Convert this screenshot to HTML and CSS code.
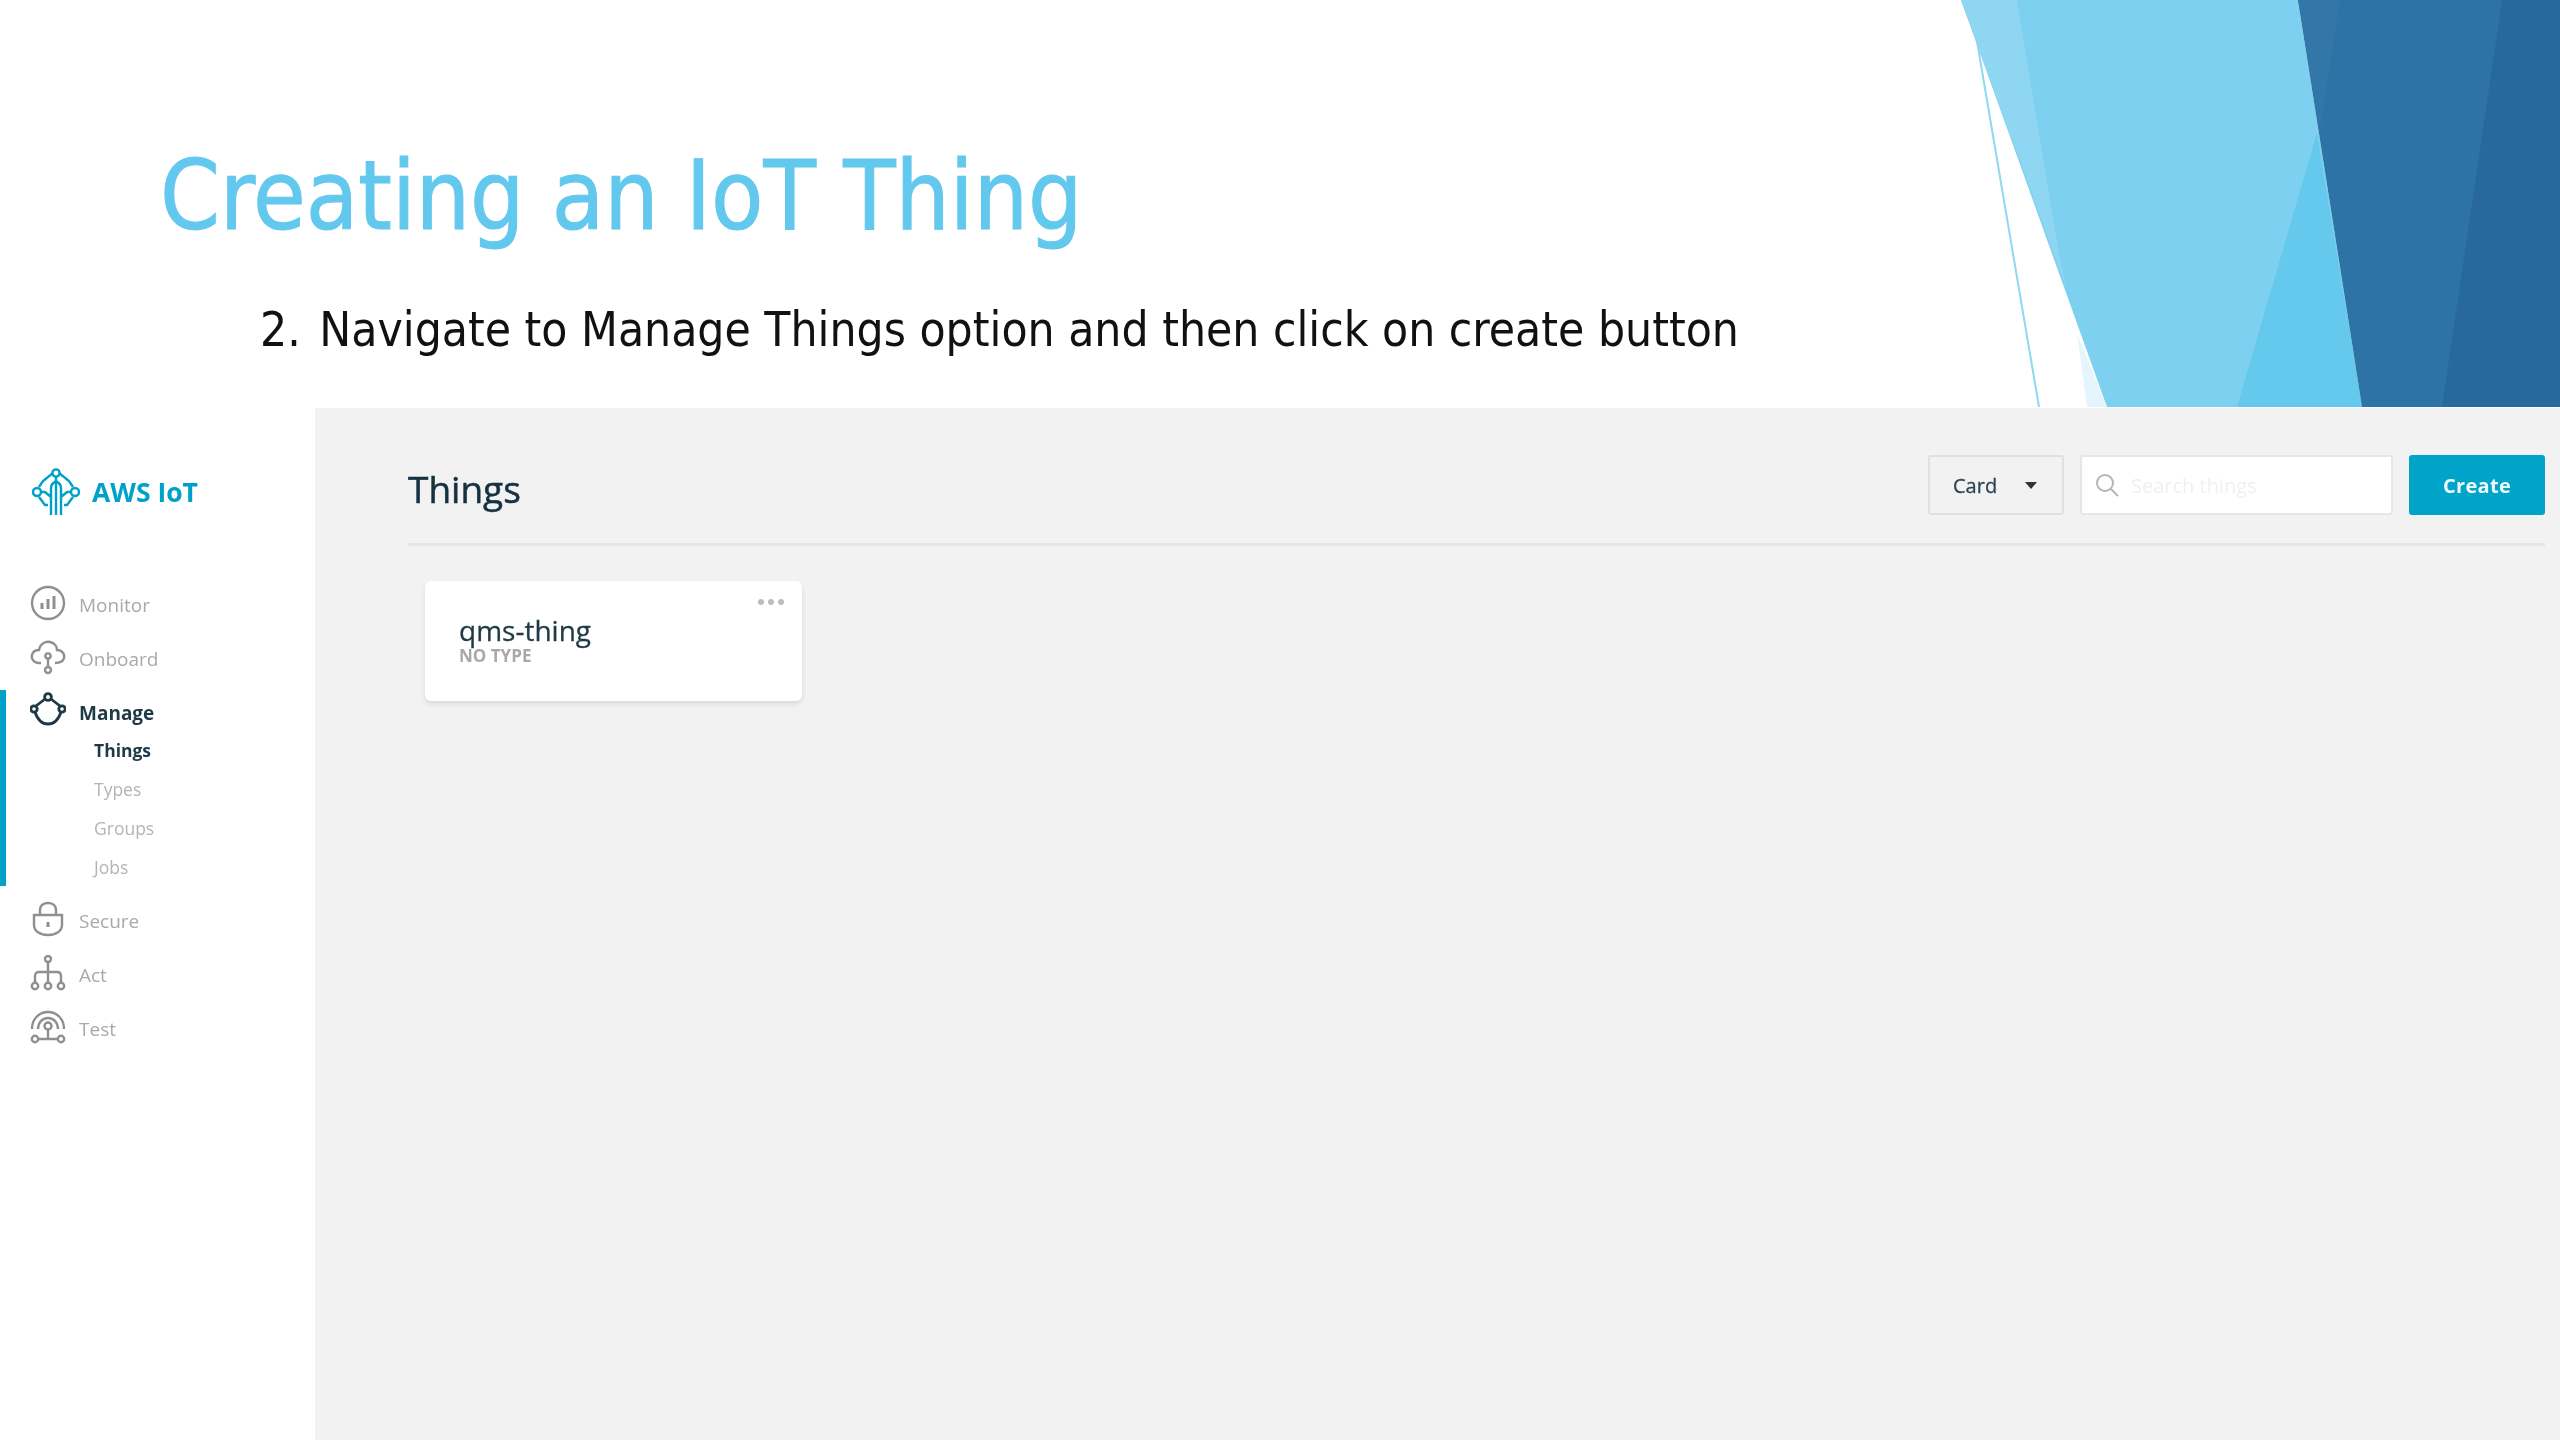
FILE: index.html
```html
<!DOCTYPE html>
<html lang="en">
<head>
<meta charset="utf-8">
<title>Creating an IoT Thing</title>
<link rel="stylesheet" href="styles.css">
</head>
<body>
<header class="slide">
  <svg class="slide-art" viewBox="0 0 640 408" width="640" height="408" aria-hidden="true">
    <polygon points="41,0 378,0 442,407 187,407" fill="#7dd0ef"/>
    <polygon points="41,0 97,0 140,260 147,290" fill="#8ed6f1"/>
    <polygon points="397,133 317,407 442,407" fill="#65c9ed"/>
    <polygon points="378,0 640,0 640,407 442,407" fill="#2d73a6"/>
    <polygon points="378,0 420,0 400,130" fill="#3277a8"/>
    <polygon points="582,0 640,0 640,407 522,407" fill="#27699f"/>
    <polygon points="157,333 187,407 167,407" fill="#e4f5fb"/>
    <line x1="50" y1="0" x2="119" y2="407" stroke="#8fd8f2" stroke-width="2"/>
  </svg>
  <h1 class="slide-title">Creating an IoT Thing</h1>
  <p class="slide-step"><span class="step-num">2.</span> Navigate to Manage Things option and then click on create button</p>
</header>
<div class="app">
  <nav class="sidebar">
    <div class="brand">
      <svg class="brand-icon" viewBox="0 0 48 48" fill="none" stroke="#00a1c9" stroke-width="2.4">
        <path d="M21 5 L11 13 L7 19 M27 5 L37 13 L41 19 M7 29 L13 37 H16 M41 29 L35 37 H32"/>
        <circle cx="24" cy="5" r="3.6"/><circle cx="5" cy="24" r="4"/><circle cx="43" cy="24" r="4"/>
        <path d="M24 9 V47 M19 47 V20 C19 16 21 15 24 13 M29 47 V20 C29 16 27 15 24 13 M9 24 H13 L19 29 M39 24 H35 L29 29"/>
      </svg>
      <span class="brand-name">AWS IoT</span>
    </div>
    <a class="nav-row">
      <svg class="nav-icon" viewBox="0 0 36 36" fill="none" stroke="#8f8f8f" stroke-width="2.4"><circle cx="18" cy="18" r="16"/><path d="M12 24 V18 M18 24 V14 M24 24 V11" stroke-width="3"/></svg>
      <span class="nav-label">Monitor</span>
    </a>
    <a class="nav-row">
      <svg class="nav-icon" viewBox="0 0 36 36" fill="none" stroke="#8f8f8f" stroke-width="2.4"><path d="M11 24 H9 C4 24 1 20 2 16 C3 12 6 11 9 11 C10 5 15 2 20 3 C25 4 27 8 27 11 C32 11 35 15 34 19 C33 23 30 24 25 24"/><circle cx="18" cy="17" r="2.6"/><path d="M18 20 V28"/><circle cx="18" cy="31" r="3"/></svg>
      <span class="nav-label">Onboard</span>
    </a>
    <div class="nav-group">
      <a class="nav-row nav-row-head">
        <svg class="nav-icon" viewBox="0 0 36 36" fill="none" stroke="#1f3a47" stroke-width="2.8"><circle cx="18" cy="5" r="3.400"/><circle cx="4" cy="17" r="3.200"/><circle cx="32" cy="17" r="3.200"/><path d="M15 7 L6 14 M21 7 L30 14 M5 20 C7 26 10 32 18 32 C26 32 29 26 31 20"/></svg>
        <span class="nav-label nav-label-active">Manage</span>
      </a>
      <a class="nav-sub nav-sub-active">Things</a>
      <a class="nav-sub">Types</a>
      <a class="nav-sub">Groups</a>
      <a class="nav-sub">Jobs</a>
    </div>
    <a class="nav-row nav-row-after">
      <svg class="nav-icon" viewBox="0 0 36 36" fill="none" stroke="#8f8f8f" stroke-width="2.4"><path d="M10 14 V9 C10 4 14 2 18 2 C22 2 26 4 26 9 V14"/><path d="M4 14 H32 V24 C32 30 26 34 18 34 C10 34 4 30 4 24 Z"/><path d="M18 21 V26" stroke-width="3"/></svg>
      <span class="nav-label">Secure</span>
    </a>
    <a class="nav-row">
      <svg class="nav-icon" viewBox="0 0 36 36" fill="none" stroke="#8f8f8f" stroke-width="2.4"><circle cx="18" cy="4" r="3"/><path d="M18 7 V28 M5 28 V21 C5 18 7 17 9 17 H27 C29 17 31 18 31 21 V28"/><circle cx="5" cy="31" r="3.200"/><circle cx="18" cy="31" r="3.200"/><circle cx="31" cy="31" r="3.200"/></svg>
      <span class="nav-label">Act</span>
    </a>
    <a class="nav-row">
      <svg class="nav-icon" viewBox="0 0 36 36" fill="none" stroke="#8f8f8f" stroke-width="2.4"><path d="M2 20 C2 10 9 3 18 3 C27 3 34 10 34 20"/><path d="M8 20 C8 14 12 9 18 9 C24 9 28 14 28 20"/><circle cx="18" cy="17" r="3.500"/><path d="M18 21 V30 M8 30 H28"/><circle cx="5" cy="30" r="3.200"/><circle cx="31" cy="30" r="3.200"/></svg>
      <span class="nav-label">Test</span>
    </a>
  </nav>
  <main class="content">
    <div class="toolbar">
      <h2 class="page-title">Things</h2>
      <div class="actions">
        <button class="view-select">Card<span class="caret"></span></button>
        <div class="search">
          <svg class="search-icon" viewBox="0 0 24 24" fill="none" stroke="#b5b5b5" stroke-width="2"><circle cx="10" cy="10" r="8"/><path d="M16 16 L23 23"/></svg>
          <span class="search-text">Search things</span>
        </div>
        <button class="create">Create</button>
      </div>
    </div>
    <article class="thing-card">
      <div class="card-dots"><i></i><i></i><i></i></div>
      <div class="thing-name">qms-thing</div>
      <div class="thing-type">NO TYPE</div>
    </article>
  </main>
</div>
</body>
</html>
```
FILE: styles.css
```css
html, body { margin: 0; padding: 0; background: #fff; }
body { width: 2560px; height: 1440px; overflow: hidden; font-family: "Open Sans", sans-serif; }

.slide { position: relative; height: 408px; box-sizing: border-box; padding: 136px 0 0 160px; overflow: hidden; }
.slide-art { position: absolute; top: 0; right: 0; filter: blur(.6px); }
.slide-title { margin: 0; font-family: "DejaVu Sans", sans-serif; font-stretch: condensed; font-weight: 400; font-size: 95.3px; line-height: 120px; color: #63c8ee; -webkit-text-stroke: 1px #63c8ee; filter: blur(.5px); }
.slide-step { margin: 44px 0 0 100px; font-family: "DejaVu Sans", sans-serif; font-stretch: condensed; font-size: 47.5px; line-height: 60px; color: #111; filter: blur(.4px); }
.step-num { margin-right: 5px; }

.app { display: flex; height: 1032px; }
.sidebar { width: 315px; flex: none; display: flex; flex-direction: column; filter: blur(.6px); }
.brand { height: 168px; display: flex; align-items: center; gap: 12px; padding-left: 32px; box-sizing: border-box; }
.brand-icon { width: 48px; height: 48px; }
.brand-name { font-weight: 700; font-size: 26.500px; color: #00a1c9; }

.nav-row { height: 54px; display: flex; align-items: center; gap: 13px; padding-left: 30px; }
.nav-row-head { height: 40px; }
.nav-row-after { margin-top: 6px; }
.nav-icon { width: 36px; height: 36px; flex: none; }
.nav-label { font-size: 19px; color: #a9a9a9; padding-top: 4px; }
.nav-label-active { font-weight: 700; color: #1f3a47; padding-top: 6px; }
.nav-group { margin-top: 6px; box-shadow: inset 6px 0 0 #00a1c9; }
.nav-sub { display: flex; align-items: center; height: 39px; padding-left: 94px; font-size: 17.500px; color: #b4b4b4; }
.nav-sub:first-of-type { margin-top: 1px; }
.nav-sub-active { font-weight: 700; color: #1f3a47; }

.content { flex: 1; background: #f2f2f2; box-sizing: border-box; padding: 47px 15px 0 93px; filter: blur(.6px); }
.toolbar { display: flex; justify-content: space-between; align-items: center; padding-bottom: 28px; border-bottom: 3px solid #e5e5e5; }
.page-title { margin: 8px 0 0; font-weight: 400; font-size: 37px; line-height: 50px; color: #16313f; -webkit-text-stroke: .5px #16313f; }
.actions { display: flex; align-items: stretch; height: 60px; }
.view-select { width: 136px; margin-right: 16px; padding: 0 0 0 23px; background: #f2f2f2; border: 2px solid #e0e0e0; border-radius: 3px; display: flex; align-items: center; font: 400 20px "Open Sans", sans-serif; color: #2b4653; -webkit-text-stroke: .3px #2b4653; }
.caret { margin-left: 28px; border: 6px solid transparent; border-top: 7px solid #333; border-bottom: 0; }
.search { width: 313px; margin-right: 16px; box-sizing: border-box; background: #fff; border: 2px solid #e6e6e6; border-radius: 3px; display: flex; align-items: center; padding-left: 13px; gap: 12px; }
.search-icon { width: 24px; height: 24px; }
.search-text { font-size: 20px; color: #f0f0f0; }
.create { width: 136px; background: #00a4c9; border: 0; border-radius: 3px; padding-top: 2px; font: 700 20px "Open Sans", sans-serif; letter-spacing: .3px; color: #eef9fc; }

.thing-card { position: relative; width: 377px; height: 120px; margin: 35px 0 0 17px; box-sizing: border-box; padding: 32px 0 0 34px; background: #fff; border-radius: 6px; box-shadow: 0 3px 5px rgba(0,0,0,.1); }
.card-dots { position: absolute; top: 18px; right: 18px; display: flex; gap: 4px; }
.card-dots i { width: 6px; height: 6px; border-radius: 50%; background: #bdbdbd; }
.thing-name { font-size: 28px; line-height: 34px; color: #1f3a47; -webkit-text-stroke: .3px #1f3a47; }
.thing-type { font-size: 17px; line-height: 18px; font-weight: 700; color: #a8a8a8; }
```
